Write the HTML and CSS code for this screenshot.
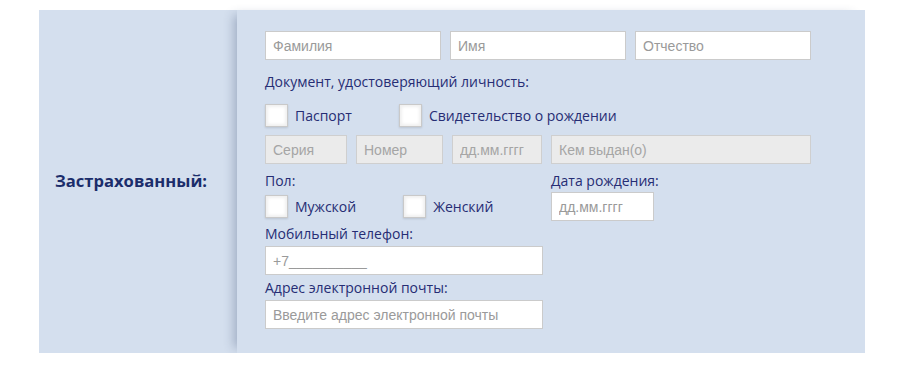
FILE: index.html
```html
<!DOCTYPE html>
<html lang="ru">
<head>
  <meta charset="UTF-8">
  <title>Застрахованный</title>
  <link rel="stylesheet" href="styles.css">
</head>
<body>
  <!-- Блок данных застрахованного -->
  <div class="panel">
    <div class="side">
      <span class="side-title">Застрахованный:</span>
    </div>

    <div class="form">
      <!-- ФИО -->
      <div class="row">
        <input class="field field-name" type="text" placeholder="Фамилия">
        <input class="field field-name" type="text" placeholder="Имя">
        <input class="field field-name" type="text" placeholder="Отчество">
      </div>

      <!-- Документ -->
      <div class="label label-doc">Документ, удостоверяющий личность:</div>
      <div class="checks checks-doc">
        <label class="check"><span class="box"></span>Паспорт</label>
        <label class="check"><span class="box"></span>Свидетельство о рождении</label>
      </div>
      <div class="row row-doc">
        <input class="field field-series" type="text" placeholder="Серия" disabled>
        <input class="field field-number" type="text" placeholder="Номер" disabled>
        <input class="field field-date" type="text" placeholder="дд.мм.гггг" disabled>
        <input class="field field-issued" type="text" placeholder="Кем выдан(о)" disabled>
      </div>

      <!-- Пол и дата рождения -->
      <div class="person">
        <div class="label">Пол:</div>
        <div class="label">Дата рождения:</div>
        <div class="checks">
          <label class="check"><span class="box"></span>Мужской</label>
          <label class="check"><span class="box"></span>Женский</label>
        </div>
        <input class="field field-birth" type="text" placeholder="дд.мм.гггг">
      </div>

      <!-- Контакты -->
      <div class="label label-contact">Мобильный телефон:</div>
      <input class="field field-wide" type="text" placeholder="+7__________">
      <div class="label label-contact">Адрес электронной почты:</div>
      <input class="field field-wide" type="text" placeholder="Введите адрес электронной почты">
    </div>
  </div>
</body>
</html>
```

FILE: styles.css
```css
/* Страница */
body {
  margin: 0;
  background: #fff;
  font-family: "Open Sans", "Noto Sans", sans-serif;
}

/* Панель */
.panel {
  display: flex;
  width: 826px;
  height: 343px;
  margin: 10px 0 0 39px;
  background: #d4dfee;
}

/* Левая колонка с заголовком */
.side {
  width: 198px;
  flex-shrink: 0;
  display: flex;
  align-items: center;
  padding-left: 16px;
  box-sizing: border-box;
}

.side-title {
  font-size: 16.6px;
  font-weight: 700;
  color: #1b2d6b;
  margin-top: -3px;
}

/* Правая колонка с полями */
.form {
  flex: 1;
  padding: 21px 28px 0;
  box-shadow: -8px 0 10px -5px rgba(40, 60, 100, 0.3);
}

.row {
  display: flex;
  gap: 9px;
}

.row-doc {
  margin-top: 8px;
}

/* Подписи */
.label {
  font-size: 14px;
  line-height: 18px;
  color: #262d74;
}

.label-doc {
  margin-top: 13px;
}

.label-contact {
  margin-top: 4px;
  margin-bottom: 3px;
}

/* Поля ввода */
.field {
  display: block;
  height: 29px;
  box-sizing: border-box;
  padding: 0 7px;
  border: 1px solid #cbcbcb;
  background: #fff;
  font-family: "Liberation Sans", Arial, sans-serif;
  font-size: 14px;
  color: #333;
  outline: none;
}

.field::placeholder {
  color: #9a9a9a;
}

.field:disabled {
  background: #ebebeb;
  border-color: #cfcfcf;
}

.field:disabled::placeholder {
  color: #a5a5a5;
}

.field-name { width: 176px; }
.field-series { width: 82px; }
.field-number { width: 87px; }
.field-date { width: 90px; }
.field-issued { width: 260px; }
.field-birth { width: 103px; }
.field-wide { width: 278px; }

/* Чекбоксы */
.checks {
  display: flex;
  gap: 47px;
}

.checks-doc {
  margin-top: 13px;
}

.check {
  display: flex;
  align-items: center;
  gap: 7px;
  font-size: 14px;
  color: #262d74;
}

.box {
  width: 23px;
  height: 23px;
  box-sizing: border-box;
  border: 1px solid #c9c9c9;
  background: #fff;
  box-shadow: inset 0 0 3px 2px #f0f0f0, 0 1px 2px rgba(0, 0, 0, 0.12);
}

/* Пол и дата рождения */
.person {
  display: grid;
  grid-template-columns: 286px auto;
  align-items: center;
  row-gap: 2px;
  margin-top: 8px;
}
```
